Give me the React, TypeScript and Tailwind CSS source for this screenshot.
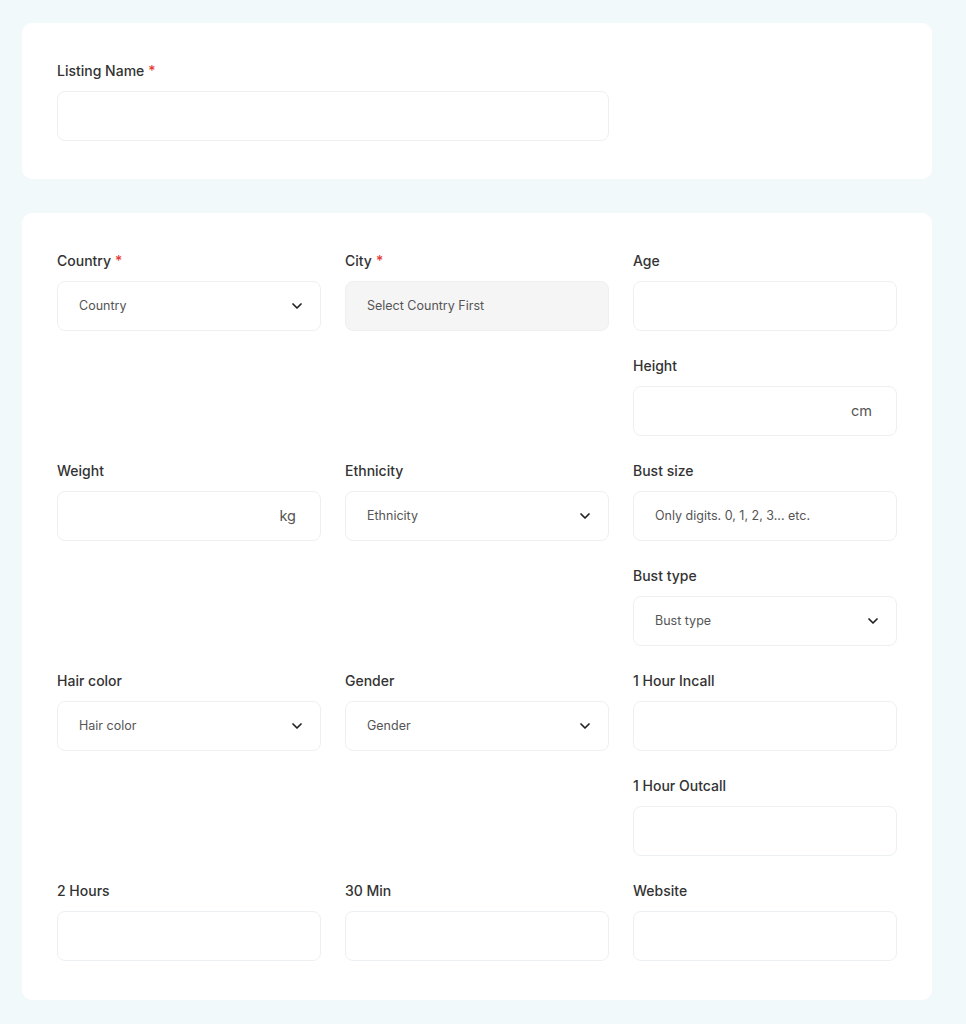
import { ChevronDown } from 'lucide-react'

type Field = {
  label: string
  required?: boolean
  kind: 'text' | 'select' | 'disabled' | 'suffix'
  placeholder?: string
  suffix?: string
  col3?: boolean
}

const fields: Field[] = [
  { label: 'Country', required: true, kind: 'select', placeholder: 'Country' },
  { label: 'City', required: true, kind: 'disabled', placeholder: 'Select Country First' },
  { label: 'Age', kind: 'text' },
  { label: 'Height', kind: 'suffix', suffix: 'cm', col3: true },
  { label: 'Weight', kind: 'suffix', suffix: 'kg' },
  { label: 'Ethnicity', kind: 'select', placeholder: 'Ethnicity' },
  { label: 'Bust size', kind: 'text', placeholder: 'Only digits. 0, 1, 2, 3... etc.' },
  { label: 'Bust type', kind: 'select', placeholder: 'Bust type', col3: true },
  { label: 'Hair color', kind: 'select', placeholder: 'Hair color' },
  { label: 'Gender', kind: 'select', placeholder: 'Gender' },
  { label: '1 Hour Incall', kind: 'text' },
  { label: '1 Hour Outcall', kind: 'text', col3: true },
  { label: '2 Hours', kind: 'text' },
  { label: '30 Min', kind: 'text' },
  { label: 'Website', kind: 'text' },
]

function Label({ text, required }: { text: string; required?: boolean }) {
  return (
    <div className="h-5 mb-[10px] text-[14px] leading-5 font-medium text-[#333]">
      {text}
      {required && <span className="text-[#e53935] ml-1">*</span>}
    </div>
  )
}

function Control({ f }: { f: Field }) {
  const base = 'h-[50px] w-full rounded-[8px] border border-[#edf0f3] flex items-center px-[21px] text-[12.5px] text-[#555]'
  if (f.kind === 'select') {
    return (
      <div className={base + ' bg-white justify-between pr-[15px]'}>
        <span>{f.placeholder}</span>
        <ChevronDown size={16} strokeWidth={2.6} className="text-[#222]" />
      </div>
    )
  }
  if (f.kind === 'disabled') {
    return <div className={base + ' bg-[#f5f5f5]'}>{f.placeholder}</div>
  }
  if (f.kind === 'suffix') {
    return (
      <div className={base + ' bg-white justify-end pr-6 text-[14.5px] text-[#444]'}>
        <span>{f.suffix}</span>
      </div>
    )
  }
  return <div className={base + ' bg-white'}>{f.placeholder}</div>
}

export default function App() {
  return (
    <div className="min-h-screen bg-[#f2f9fb] pt-[23px] pb-6 pl-[22px]" style={{ fontFamily: 'Inter, "Noto Sans", sans-serif' }}>
      <div className="w-[910px] flex flex-col gap-[34px]">
        <div className="bg-white rounded-[10px] px-[35px] py-[38px]">
          <div className="w-[552px]">
            <Label text="Listing Name" required />
            <div className="h-[50px] w-full rounded-[8px] border border-[#edf0f3] bg-white" />
          </div>
        </div>

        <div className="bg-white rounded-[10px] px-[35px] pt-[38px] pb-[39px]">
          <div className="grid grid-cols-3 gap-x-6 gap-y-[25px]">
            {fields.map((f) => (
              <div key={f.label} className={f.col3 ? 'col-start-3' : ''}>
                <Label text={f.label} required={f.required} />
                <Control f={f} />
              </div>
            ))}
          </div>
        </div>
      </div>
    </div>
  )
}
